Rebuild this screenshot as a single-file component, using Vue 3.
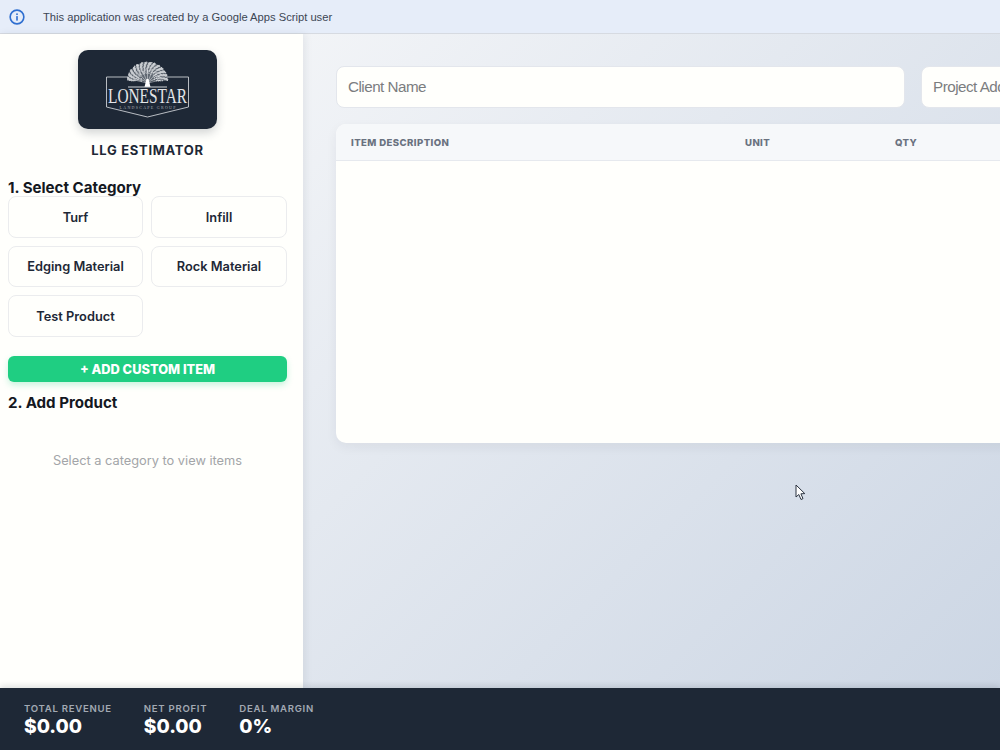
<script setup>
const categories = ['Turf', 'Infill', 'Edging Material', 'Rock Material', 'Test Product']
const stats = [
  { label: 'TOTAL REVENUE', value: '$0.00' },
  { label: 'NET PROFIT', value: '$0.00' },
  { label: 'DEAL MARGIN', value: '0%' }
]
// branches of the logo tree, fanned out from the trunk
const branches = Array.from({ length: 9 }, (_, i) => {
  const a = Math.PI * ((i + 0.5) / 9)
  return { x: 69.5 - Math.cos(a) * 14, y: 32 - Math.sin(a) * 12 }
})
// leaves are scattered over the dome with a low-discrepancy walk
const leaves = Array.from({ length: 340 }, (_, i) => {
  const a = Math.PI * ((i * 0.7548776) % 1)
  const r = 0.3 + 0.7 * Math.sqrt((i * 0.5698403) % 1)
  return { x: 69.5 - Math.cos(a) * r * 20.5, y: 31 - Math.sin(a) * r * 19 }
})
</script>

<template>
  <div class="page">
    <div class="banner">
      <svg class="info" viewBox="0 0 20 20" width="18" height="18">
        <circle cx="10" cy="10" r="7.6" fill="none" stroke="#2f6fd0" stroke-width="1.8" />
        <rect x="9.1" y="9" width="1.8" height="5" fill="#2f6fd0" />
        <rect x="9.1" y="6" width="1.8" height="1.8" fill="#2f6fd0" />
      </svg>
      <span>This application was created by a Google Apps Script user</span>
    </div>

    <div class="body">
      <aside class="sidebar">
        <div class="logo">
          <svg viewBox="0 0 139 79" width="139" height="79">
            <path d="M49 31 A20.500 19 0 0 1 90 31 Z" fill="#5f6771" />
            <circle v-for="(l, i) in leaves" :key="'l' + i" :cx="l.x" :cy="l.y" r="0.65" fill="#d3d6da" />
            <g stroke="#eef0f2" stroke-width="0.5" fill="none">
              <line v-for="(b, i) in branches" :key="i" x1="69.5" y1="33" :x2="b.x" :y2="b.y" />
            </g>
            <path d="M68.500 29 L66.500 37 H72.500 L70.500 29 Z" fill="#fff" />
            <path d="M50 27 H28.500 V57 L69.500 67 L110.500 57 V27 H89" fill="none" stroke="#c9cdd2" stroke-width="0.9" />
            <rect x="50" y="36.500" width="39" height="1" fill="#cfd3d8" />
            <text x="69.500" y="53" text-anchor="middle" class="logo-name" textLength="79" lengthAdjust="spacingAndGlyphs">LONESTAR</text>
            <text x="69.500" y="59" text-anchor="middle" class="logo-sub" textLength="56" lengthAdjust="spacing">LANDSCAPE GROUP</text>
          </svg>
        </div>
        <div class="brand">LLG ESTIMATOR</div>

        <h3 class="step first">1. Select Category</h3>
        <div class="cats">
          <button v-for="c in categories" :key="c" class="cat">{{ c }}</button>
        </div>
        <button class="custom">+ ADD CUSTOM ITEM</button>

        <h3 class="step">2. Add Product</h3>
        <p class="empty">Select a category to view items</p>
      </aside>

      <main class="main">
        <div class="content">
          <div class="fields">
            <input class="field" placeholder="Client Name" />
            <input class="field" placeholder="Project Address" />
          </div>
          <div class="table">
            <div class="thead">
              <span>ITEM DESCRIPTION</span>
              <span>UNIT</span>
              <span>QTY</span>
            </div>
          </div>
        </div>
        <svg class="cursor" viewBox="0 0 12 18" width="12" height="18">
          <path d="M1 1 L1 13 L3.800 10.500 L6 15.500 L8 14.600 L5.900 9.800 L9.800 9.600 Z" fill="#fff" stroke="#2b3340" stroke-width="1" />
        </svg>
      </main>
    </div>

    <footer class="footer">
      <div v-for="s in stats" :key="s.label" class="stat">
        <div class="stat-label">{{ s.label }}</div>
        <div class="stat-value">{{ s.value }}</div>
      </div>
    </footer>
  </div>
</template>

<style>
html, body { margin: 0; height: 100%; overflow: hidden; }
</style>

<style scoped>
.page {
  width: 1000px;
  height: 750px;
  display: flex;
  flex-direction: column;
  overflow: hidden;
  font-family: Inter, "Liberation Sans", sans-serif;
  color: #1e2836;
}

.banner {
  height: 34px;
  flex: none;
  box-sizing: border-box;
  display: flex;
  align-items: center;
  gap: 17px;
  padding-left: 8px;
  background: #e6edf9;
  border-bottom: 1px solid #d6dae1;
  font-family: "Liberation Sans", Arial, sans-serif;
  font-size: 11.200px;
  color: #3c4654;
}

.body {
  flex: 1;
  min-height: 0;
  display: flex;
}

.sidebar {
  width: 303px;
  flex: none;
  box-sizing: border-box;
  padding: 16px 16px 0 8px;
  background: #fffffc;
  box-shadow: 2px 0 8px rgba(30, 40, 54, 0.08);
  z-index: 1;
}

.logo {
  width: 139px;
  height: 79px;
  margin-left: 70px;
  border-radius: 10px;
  background: #1e2836;
  box-shadow: 0 4px 10px rgba(30, 40, 54, 0.2);
}

.logo svg {
  display: block;
}

.logo-name {
  font-family: "Liberation Serif", serif;
  font-size: 20px;
  fill: #e3e5e8;
}

.logo-sub {
  font-family: "Liberation Serif", serif;
  font-size: 4px;
  fill: #a9aeb5;
}

.brand {
  margin-top: 13px;
  width: 279px;
  text-align: center;
  font-size: 13px;
  font-weight: 700;
  letter-spacing: 0.7px;
  line-height: 16px;
}

.step {
  margin: 0;
  font-size: 15.100px;
  font-weight: 700;
  line-height: 18px;
  color: #14181f;
}

.step.first {
  margin-top: 21px;
}

.cats {
  display: grid;
  grid-template-columns: 135px 136px;
  gap: 8px;
  margin-top: -1px;
}

.cat {
  height: 41.500px;
  padding: 1px 0 0;
  background: #fffffc;
  border: 1px solid #ebecee;
  border-radius: 8px;
  font-family: inherit;
  font-size: 12.800px;
  font-weight: 600;
  color: #1e2836;
}

.custom {
  display: block;
  width: 100%;
  height: 26px;
  margin-top: 19px;
  padding: 1px 0 0;
  border: none;
  border-radius: 6px;
  background: #1fce82;
  box-shadow: 0 3px 6px rgba(31, 206, 130, 0.25);
  font-family: inherit;
  font-size: 12.800px;
  font-weight: 800;
  color: #fff;
}

.custom + .step {
  margin-top: 12.500px;
}

.empty {
  margin: 40.500px 0 0;
  text-align: center;
  font-size: 12.800px;
  line-height: 16px;
  color: #a3a5a8;
}

.main {
  flex: 1;
  min-width: 0;
  position: relative;
  overflow: hidden;
  background: linear-gradient(135deg, #f2f4f7 0%, #ccd6e4 100%);
}

.content {
  width: 1154px;
  padding: 32px 0 0 33px;
}

.fields {
  display: grid;
  grid-template-columns: 569px 569px;
  gap: 16px;
}

.field {
  height: 42px;
  box-sizing: border-box;
  padding: 0 11px 2px;
  background: #fffffc;
  border: 1px solid #e3e6ec;
  border-radius: 8px;
  font-family: "Liberation Sans", Arial, sans-serif;
  font-size: 15.200px;
  letter-spacing: -0.5px;
}

.field::placeholder {
  color: #7b7d7f;
}

.table {
  height: 319px;
  margin-top: 16px;
  background: #fffffc;
  border-radius: 10px;
  overflow: hidden;
  box-shadow: 0 4px 12px rgba(30, 40, 54, 0.06);
}

.thead {
  height: 37px;
  box-sizing: border-box;
  display: grid;
  grid-template-columns: 394px 150px 1fr;
  align-items: center;
  padding-left: 15px;
  background: #f6f8fa;
  border-bottom: 1px solid #e6e9ee;
  font-size: 9.600px;
  font-weight: 800;
  letter-spacing: 0.4px;
  color: #6a7280;
}

.cursor {
  position: absolute;
  left: 492px;
  top: 450px;
}

.footer {
  height: 62px;
  flex: none;
  box-sizing: border-box;
  display: flex;
  gap: 32px;
  padding: 15px 24px 0;
  background: #1e2836;
  box-shadow: 0 -2px 6px rgba(30, 40, 54, 0.15);
  z-index: 2;
}

.stat-label {
  font-size: 9.600px;
  font-weight: 600;
  letter-spacing: 0.72px;
  line-height: 12px;
  color: #a2a9b3;
}

.stat-value {
  font-size: 19.200px;
  font-weight: 800;
  line-height: 23px;
  color: #fff;
}
</style>
